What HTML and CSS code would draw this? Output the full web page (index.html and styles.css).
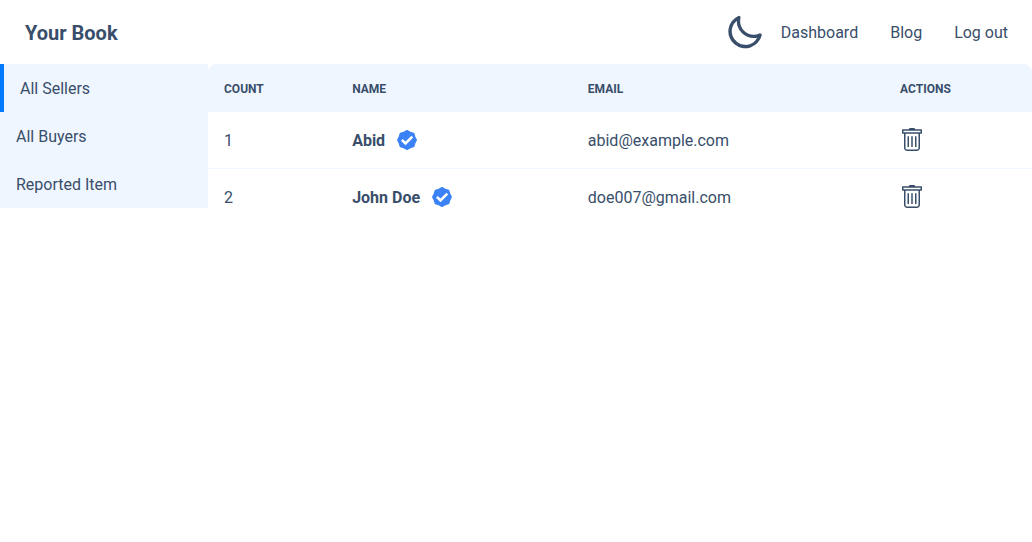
FILE: index.html
```html
<!DOCTYPE html>
<html lang="en">
<head>
<meta charset="utf-8">
<title>Your Book</title>
<link rel="stylesheet" href="styles.css">
</head>
<body>
<svg class="sprite" aria-hidden="true">
  <symbol id="verified" viewBox="0 0 20 20">
    <path fill="#3b82f6" stroke="#3b82f6" stroke-width="1.600" stroke-linejoin="round" d="M10 .8l3.140 1.630 3.360 1.070 1.070 3.360L19.200 10l-1.630 3.140-1.070 3.360-3.360 1.070L10 19.200l-3.140-1.630-3.360-1.070-1.070-3.360L.8 10l1.630-3.140L3.500 3.500l3.360-1.070z"/>
    <path fill="none" stroke="#fff" stroke-width="2.600" d="M4.900 9.900l3.600 3.600L15.300 6.700"/>
  </symbol>
  <symbol id="trash" viewBox="0 0 24 24">
    <g fill="none" stroke="currentColor" stroke-width="1.5" stroke-linejoin="round">
      <path d="M2.750 1.900h18.500v3.100H2.750z"/>
      <path d="M4.750 5v14.750a2.500 2.500 0 0 0 2.500 2.500h9.500a2.500 2.500 0 0 0 2.500-2.500V5M8.250 8.200v10.800M12 8.200v10.800M15.750 8.200v10.800"/>
    </g>
    <path fill="currentColor" d="M9.500 0h5l1 2h-7z"/>
  </symbol>
</svg>
<header class="navbar">
  <a class="brand" href="#">Your Book</a>
  <nav class="menu">
    <button class="theme" type="button" aria-label="Toggle theme">
      <svg class="moon" viewBox="0 0 24 24"><path fill="currentColor" d="M21.640 13a1 1 0 0 0-1.050-.140 8.050 8.050 0 0 1-3.370.730 8.150 8.150 0 0 1-8.140-8.100 8.590 8.590 0 0 1 .250-2A1 1 0 0 0 8 2.360a10.140 10.140 0 1 0 14 11.690 1 1 0 0 0-.360-1.050Zm-9.500 6.690A8.140 8.140 0 0 1 7.080 5.220v.270a10.150 10.150 0 0 0 10.140 10.140 9.790 9.790 0 0 0 2.100-.220 8.110 8.110 0 0 1-7.180 4.320Z"/></svg>
    </button>
    <a href="#">Dashboard</a>
    <a href="#">Blog</a>
    <a href="#">Log out</a>
  </nav>
</header>
<div class="layout">
  <nav class="sidebar">
    <a class="active" href="#">All Sellers</a>
    <a href="#">All Buyers</a>
    <a href="#">Reported Item</a>
  </nav>
  <main class="content">
    <table class="sellers">
      <thead>
        <tr><th class="count">Count</th><th class="name">Name</th><th class="email">Email</th><th>Actions</th></tr>
      </thead>
      <tbody>
        <tr>
          <td>1</td>
          <td><span class="person">Abid <svg class="badge" role="img" aria-label="Verified"><use href="#verified"/></svg></span></td>
          <td>abid@example.com</td>
          <td class="actions"><button class="delete" type="button" aria-label="Delete Abid"><svg class="bin"><use href="#trash"/></svg></button></td>
        </tr>
        <tr>
          <td>2</td>
          <td><span class="person">John Doe <svg class="badge" role="img" aria-label="Verified"><use href="#verified"/></svg></span></td>
          <td>doe007@gmail.com</td>
          <td class="actions"><button class="delete" type="button" aria-label="Delete John Doe"><svg class="bin"><use href="#trash"/></svg></button></td>
        </tr>
      </tbody>
    </table>
  </main>
</div>
</body>
</html>
```

FILE: styles.css
```css
* { box-sizing: border-box; }

body {
  margin: 0;
  background: #fff;
  color: #394e6a;
  font: 16px/24px Roboto, sans-serif;
}

a { color: inherit; text-decoration: none; }

button {
  padding: 0;
  border: 0;
  background: none;
  color: inherit;
  cursor: pointer;
}

svg { display: block; }

.sprite { display: none; }

.navbar {
  display: flex;
  align-items: center;
  justify-content: space-between;
  min-height: 64px;
  padding: 0 8px;
}

.brand {
  padding: 13px 17px 11px;
  font-size: 20px;
  line-height: 28px;
  font-weight: 700;
}

.menu {
  display: flex;
  align-items: center;
}

.menu a,
.sidebar a { padding: 13px 16px 11px; }

.moon { width: 40px; height: 40px; }

.layout {
  display: flex;
  align-items: flex-start;
}

.sidebar {
  display: flex;
  flex: none;
  flex-direction: column;
  width: 208px;
  background: #eff6ff;
}

.sidebar .active { border-left: 4px solid #047aff; }

.content { flex: 1; }

.sellers {
  width: 100%;
  border-collapse: separate;
  border-spacing: 0;
  table-layout: fixed;
  text-align: left;
}

.sellers th,
.sellers td { padding: 17px 16px 15px; }

.sellers th {
  background: #eff6ff;
  font-size: 12px;
  line-height: 16px;
  font-weight: 700;
  text-transform: uppercase;
}

.sellers th:first-child { border-top-left-radius: 8px; }
.sellers th:last-child { border-top-right-radius: 8px; }

.count { width: 15.55%; }
.name { width: 28.6%; }
.email { width: 37.9%; }

.sellers td { border-bottom: 1px solid #eff6ff; }

.sellers .actions { padding: 16px; }

.sellers tr:last-child td { border-bottom: 0; }

.person {
  display: flex;
  align-items: flex-start;
  gap: 12px;
  font-weight: 700;
}

.badge {
  width: 20px;
  height: 20px;
  margin-top: 1px;
}

.delete { display: block; }

.bin { width: 24px; height: 24px; }
```
